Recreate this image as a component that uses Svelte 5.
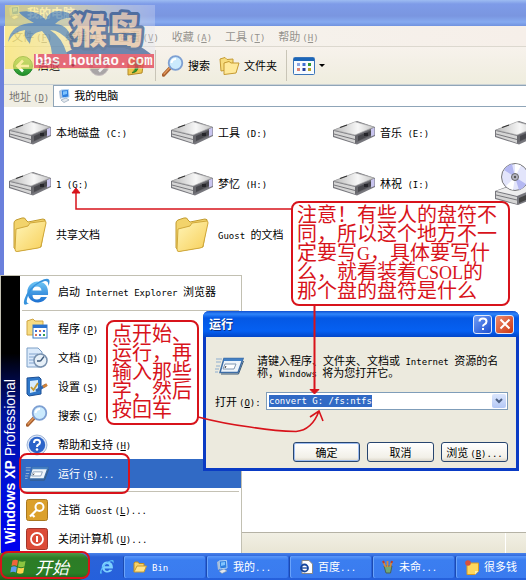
<script lang="ts">
	import { onMount } from 'svelte';

	type Entry = { icon: string; text: string; key?: string; tail?: string; active?: boolean };

	const menus: [string, string][] = [
		['文件', 'F'],
		['编辑', 'E'],
		['查看', 'V'],
		['收藏', 'A'],
		['工具', 'T'],
		['帮助', 'H']
	];

	const places = [
		{ icon: 'drive', text: '本地磁盘 (C:)' },
		{ icon: 'drive', text: '工具 (D:)' },
		{ icon: 'drive', text: '音乐 (E:)' },
		{ icon: 'drive', text: '' },
		{ icon: 'drive', text: '1 (G:)' },
		{ icon: 'drive', text: '梦忆 (H:)' },
		{ icon: 'drive', text: '林祝 (I:)' },
		{ icon: 'cd', text: '' },
		{ icon: 'folder', text: '共享文档' },
		{ icon: 'folder', text: 'Guost 的文档' }
	];

	const entries: Entry[] = [
		{ icon: 'programs', text: '程序', key: 'P' },
		{ icon: 'documents', text: '文档', key: 'D' },
		{ icon: 'settings', text: '设置', key: 'S' },
		{ icon: 'search', text: '搜索', key: 'C' },
		{ icon: 'help', text: '帮助和支持', key: 'H' },
		{ icon: 'run', text: '运行', key: 'R', tail: '...', active: true }
	];

	const exits: Entry[] = [
		{ icon: 'logoff', text: '注销 Guost', key: 'L', tail: '...' },
		{ icon: 'power', text: '关闭计算机', key: 'U', tail: '...' }
	];

	const tasks = [
		{ icon: 'smallfolder', text: 'Bin' },
		{ icon: 'computer', text: '我的...' },
		{ icon: 'page', text: '百度...' },
		{ icon: 'paint', text: '未命...' },
		{ icon: 'note', text: '很多钱' }
	];

	let command = $state('convert G: /fs:ntfs');
	let box: HTMLInputElement;

	onMount(() => {
		box.focus();
		box.select();
	});

	// Latin runs are set in a half-width face beside the full-width characters.
	function runs(s: string): string[] {
		return s.split(/([\x20-\x7e]+)/).filter(Boolean);
	}
</script>

{#snippet label(text: string, key = '', tail = '')}
	<span class="label">{#each runs(text) as part}{#if part.charCodeAt(0) < 127}<span class="lat">{part}</span>{:else}{part}{/if}{/each}{#if key}<span class="lat key">(<u>{key}</u>){tail}</span>{/if}</span>
{/snippet}

{#snippet icon(name: string)}
	{#if name === 'drive'}
		<svg width="42" height="24" viewBox="0 0 42 24">
			<path d="M0 9 24 0 42 6V15L24 23.500 0 16Z" fill="#77777d" />
			<path d="M1 9 22 .8 41 6 22 14Z" fill="url(#metal)" stroke="#aaa" stroke-width=".6" />
			<path d="M1 10 22 15V22L1 15Z" fill="#d5d5d5" />
			<path d="M1 13 22 18.500" stroke="#77777b" />
			<path d="M22 15 41 7V14L22 22Z" fill="#68686d" />
			<path d="M25 15 38 9.500V14L25 20Z" fill="#48484d" />
			<path d="M38 8 41.500 6.500V14L38 15.500Z" fill="#c9c5ef" />
			<path d="M7 6.500 14 4" stroke="#333" stroke-width="1.300" />
			<path d="M31 12h4v3h-4z" fill="#25252a" />
		</svg>
	{:else if name === 'cd'}
		<svg width="42" height="44" viewBox="0 0 42 44">
			<path d="M0 29 22 21 42 26V35L23 43 0 37Z" fill="#77777d" />
			<path d="M1 29 22 22 41 26 22 34Z" fill="#eee" />
			<path d="M1 30 22 35V42L1 36Z" fill="#d5d5d5" />
			<path d="M1 33 22 38" stroke="#77777b" />
			<path d="M24 36 40 29V34L24 41Z" fill="#444" />
			<circle cx="20" cy="15" r="13.500" fill="#e3e5fb" stroke="#777" />
			<path d="M20 15 9 8A13 13 0 0 1 17 2ZM20 15 31 22A13 13 0 0 1 24 28Z" fill="#b4b8f2" />
			<path d="M20 15 20 2A13 13 0 0 1 26 3.500ZM20 15 18 28A13 13 0 0 1 11 24Z" fill="#fff" />
			<circle cx="20" cy="15" r="3.500" fill="#b6b6c4" stroke="#666" />
			<circle cx="20" cy="15" r="1.200" fill="#555" />
		</svg>
	{:else if name === 'folder'}
		<svg width="34" height="36" viewBox="0 0 34 36">
			<path d="M1 6Q1 4 3 3L9 1Q12 0 13 3L15 5 30 2Q33 2 32 5L28 30 5 34 1 31Z" fill="#f2d36b" stroke="#c19b30" />
			<path d="M3 12 15 9 17 6 32 4Q33 4 33 6L28 29Q27 31 25 31L4 34.500Q2 35 2 32Z" fill="url(#yellow)" stroke="#d0a83a" />
		</svg>
	{:else if name === 'smallfolder'}
		<svg width="14" height="12" viewBox="0 0 14 12">
			<path d="M1 11V2L2 1H5L6 2.500H11V5" fill="#f5d26b" stroke="#b88c28" />
			<path d="M1 11 4 5H13.500L11 11Z" fill="#ffe48a" stroke="#c59a32" />
		</svg>
	{:else if name === 'folders'}
		<svg width="21" height="18" viewBox="0 0 21 18">
			<path d="M1 2 6 .5 8 2.500 14 2V12L2 14Z" fill="#f7dc7c" stroke="#c59a32" />
			<path d="M5 6 10 4.500 12 6 20 6 17 16 5 17.500Z" fill="#ffe99a" stroke="#c59a32" />
		</svg>
	{:else if name === 'up'}
		<svg width="20" height="20" viewBox="0 0 20 20">
			<path d="M2 3 9 1 11 4 18 3 16 17 2 19Z" fill="#ecc64c" stroke="#b58a28" />
			<path d="M6 17Q13 16 12 9L15 10 11 4 7 9 9.500 9Q10 14 6 17Z" fill="#2e9b2c" stroke="#176317" stroke-width=".6" />
		</svg>
	{:else if name === 'back' || name === 'forward'}
		<svg width="20" height="20" viewBox="0 0 20 20">
			<circle cx="10" cy="10" r="9.500" fill={name === 'back' ? 'url(#green)' : '#a9a5a6'} stroke={name === 'back' ? '#27872b' : '#c8bfc0'} />
			{#if name === 'back'}
				<path d="M10 4.500 4.500 10 10 15.500M5 10H16" fill="none" stroke="#fff" stroke-width="2.600" />
			{:else}
				<path d="M10 4.500 15.500 10 10 15.500M4 10H15" fill="none" stroke="#eee" stroke-width="2.600" />
			{/if}
		</svg>
	{:else if name === 'search'}
		<svg width="22" height="22" viewBox="0 0 22 22">
			<path d="M9 12 1.500 20" stroke="#a85f2e" stroke-width="3.500" stroke-linecap="round" />
			<path d="M9 11.500 2 19" stroke="#e39a5c" stroke-width="1.200" stroke-linecap="round" />
			<circle cx="13.500" cy="8" r="6.800" fill="#cbeafd" stroke="#7d9fd2" stroke-width="1.800" />
			<path d="M9.500 8Q10 4 14 4" fill="none" stroke="#fff" stroke-width="2" />
		</svg>
	{:else if name === 'views'}
		<svg width="22" height="18" viewBox="0 0 22 18">
			<rect x=".5" y=".5" width="21" height="17" rx="1" fill="#f7fbff" stroke="#3974b9" />
			<path d="M1 1H21V4H1Z" fill="#1c66b8" />
			<path d="M4 6h3v3h-3z" fill="#8ca5e3" /><path d="M9.500 6h3v3h-3z" fill="#3e6ed2" /><path d="M15 6h3v3h-3z" fill="#2f9a39" />
			<path d="M4 11h3v3h-3z" fill="#e08372" /><path d="M9.500 11h3v3h-3z" fill="#233d9b" /><path d="M15 11h3v3h-3z" fill="#b8a52c" />
		</svg>
	{:else if name === 'computer'}
		<svg width="12" height="14" viewBox="0 0 12 14">
			<path d="M3 1 10.500 .5 11 8 4 9Z" fill="#2d7fdf" stroke="#b9d8f6" />
			<path d="M5 2.500 9 2V5L5 6Z" fill="#7fc4ff" />
			<path d="M1 2 3 1 4 9 2 10Z" fill="#a9bed8" />
			<path d="M3 11 8 9 11 11 6 13.500Z" fill="#e4e9ee" stroke="#8096ac" stroke-width=".6" />
		</svg>
	{:else if name === 'ie' || name === 'smallie'}
		<svg width={name === 'ie' ? 28 : 16} height={name === 'ie' ? 30 : 16} viewBox="0 0 28 30">
			<path d="M14 4.500A10.500 10.500 0 1 0 24 20H18Q17 22.500 14 22.500 9.500 22.500 9.500 18H25Q26 4.500 14 4.500ZM9.500 13.500Q10 9.500 14 9.500T18.500 13.500Z" fill={name === 'ie' ? 'url(#blue)' : '#7fd0ff'} fill-rule="evenodd" />
			<path d="M6 26Q-1 31 1.500 22 5 11 17 4 27-1 26.500 5 26.500 7 25 9 26 4 22 4 11 6 5 19 2 27 6 26Z" fill={name === 'ie' ? '#3793dd' : '#5abdf8'} />
		</svg>
	{:else if name === 'programs'}
		<svg width="22" height="22" viewBox="0 0 22 22">
			<path d="M1 3 7 1 9 3H17V17H1Z" fill="#f6dc82" stroke="#d0a644" />
			<rect x="7" y="7" width="14" height="13" fill="#fff" stroke="#377bc8" />
			<path d="M7 7H21V10H7Z" fill="#2a72ce" />
			<path d="M9 12h2v2H9zM17 12h2v2h-2zM13 16h2v2h-2z" fill="#3d70d3" />
			<path d="M13 12h2v2h-2zM9 16h2v2H9z" fill="#da6e55" /><path d="M17 16h2v2h-2z" fill="#37a04a" />
		</svg>
	{:else if name === 'documents'}
		<svg width="22" height="22" viewBox="0 0 22 22">
			<path d="M1 1H12L16 5V20H1Z" fill="#dbeafb" stroke="#7d9fc6" />
			<path d="M3 7H12M3 10H9M3 13H8M3 16H8" stroke="#83a4ce" />
			<circle cx="14.500" cy="13.500" r="6.500" fill="#e7f0f8" stroke="#7790ae" stroke-width="1.500" />
			<path d="M14.500 14 18 9.500M14.500 14H11" stroke="#405b7b" stroke-width="1.300" />
		</svg>
	{:else if name === 'settings'}
		<svg width="22" height="22" viewBox="0 0 22 22">
			<path d="M1 2 13 1 15 3V18L3 20 1 18Z" fill="#2f78ca" stroke="#1d4f94" />
			<path d="M4 5 12 4V15L4 17Z" fill="#d8edff" />
			<path d="M5 11 7.500 14 12 7" fill="none" stroke="#c49a35" stroke-width="1.800" />
			<path d="M10 15 20 9" stroke="#2f67b0" stroke-width="3" /><path d="M17 11 21 8.500" stroke="#d18136" stroke-width="3" />
		</svg>
	{:else if name === 'help'}
		<svg width="22" height="22" viewBox="0 0 22 22">
			<circle cx="11" cy="11" r="10" fill="#dce6f6" stroke="#9db4d8" />
			<circle cx="11" cy="11" r="8.200" fill="#2b63c9" />
			<path d="M8 9Q8 5.800 11 5.800T14 8.600Q14 10.200 12 11 11 11.500 11 13" fill="none" stroke="#fff" stroke-width="2" />
			<circle cx="11" cy="15.500" r="1.300" fill="#fff" />
		</svg>
	{:else if name === 'run'}
		<svg width="29" height="18" viewBox="0 0 29 18">
			<path d="M1 2H7M1 5H6M1 9H5M0 12H4M0 15H3" stroke="#8eaed0" stroke-width="1.200" />
			<path d="M9 1.500H28L23 15.500H5Z" fill="#eef4fa" stroke="#3d6da6" stroke-width="1.500" />
			<path d="M9 1.500H28L27 4H8.500Z" fill="#4481c4" />
			<path d="M10 7H21L19 12H8Z" fill="#fff" stroke="#8097b2" />
			<path d="M11 9 10 11" stroke="#333" /><path d="M6 17H23.500L28.500 4" fill="none" stroke="#3a5877" />
		</svg>
	{:else if name === 'logoff'}
		<svg width="22" height="22" viewBox="0 0 22 22">
			<rect x=".5" y=".5" width="21" height="21" rx="2" fill="#dba02c" stroke="#a97820" />
			<circle cx="13.500" cy="8" r="4" fill="none" stroke="#fff" stroke-width="2" />
			<path d="M10.500 11 4 17.500M6 15.500 8.500 18" stroke="#fff" stroke-width="2.200" />
		</svg>
	{:else if name === 'power'}
		<svg width="22" height="22" viewBox="0 0 22 22">
			<rect x=".5" y=".5" width="21" height="21" rx="2" fill="#dc4b37" stroke="#a3362a" />
			<circle cx="11" cy="11" r="6" fill="none" stroke="#fff" stroke-width="1.800" />
			<path d="M11 8V14" stroke="#fff" stroke-width="2" />
		</svg>
	{:else if name === 'flag'}
		<svg width="17" height="17" viewBox="0 0 17 17">
			<path d="M2.500 2.500Q5.500 1 8 2.500L7 8Q4 6.500 1.500 8Z" fill="#f0643a" />
			<path d="M9 3Q12 4.500 15.500 3L14.500 8.500Q11 10 8 8.500Z" fill="#8bc540" />
			<path d="M1.300 9Q4 7.500 6.800 9L6 14.500Q3 13 .3 14.500Z" fill="#5b9cf0" />
			<path d="M7.800 9.500Q11 11 14.300 9.500L13.200 15Q10 16.500 6.900 15Z" fill="#fbd24b" />
		</svg>
	{:else if name === 'page'}
		<svg width="14" height="14" viewBox="0 0 14 14">
			<path d="M3 .5H10L13.500 4V13.500H3Z" fill="#fff" stroke="#888" />
			<circle cx="5.500" cy="8" r="3.500" fill="none" stroke="#16469c" stroke-width="1.800" /><path d="M3 8H9" stroke="#16469c" stroke-width="1.300" />
		</svg>
	{:else if name === 'paint'}
		<svg width="12" height="14" viewBox="0 0 12 14">
			<path d="M2 6H10L8.500 13H4Z" fill="#72a878" stroke="#4b6258" />
			<path d="M3.500 7 1 1M5.500 7V1M8 7 10 1" stroke="#d58a3c" stroke-width="1.800" />
			<path d="M1 1 2 3M10 1 9.500 3" stroke="#b83a31" stroke-width="2" />
		</svg>
	{:else if name === 'note'}
		<svg width="14" height="15" viewBox="0 0 14 15">
			<path d="M2 3H13.500V11L10 14.500H2Z" fill="#ffd75c" stroke="#d89a24" />
			<path d="M13.500 11H10V14.500" fill="#ffefaa" />
			<circle cx="3" cy="3" r="2.800" fill="#d8503d" />
		</svg>
	{/if}
{/snippet}

<svg class="defs" width="0" height="0" aria-hidden="true">
	<linearGradient id="metal"><stop offset="0" stop-color="#bbb" /><stop offset=".6" stop-color="#f7f7f7" /><stop offset="1" stop-color="#c4c4c4" /></linearGradient>
	<linearGradient id="yellow" x2="1" y2="1"><stop offset="0" stop-color="#fff5b8" /><stop offset="1" stop-color="#f7cf58" /></linearGradient>
	<linearGradient id="green" x2="0" y2="1"><stop offset="0" stop-color="#74cf60" /><stop offset="1" stop-color="#1f8f2c" /></linearGradient>
	<linearGradient id="blue" x2="0" y2="1"><stop offset="0" stop-color="#6fc7f5" /><stop offset="1" stop-color="#1b6fd0" /></linearGradient>
	<linearGradient id="sand"><stop offset="0" stop-color="#fbe45c" /><stop offset=".45" stop-color="#f3e399" /><stop offset="1" stop-color="#dfe2f5" stop-opacity=".5" /></linearGradient>
</svg>

<div class="desktop">
	<main class="window">
		<header class="caption">{@render icon('computer')}<h1>我的电脑</h1></header>
		<nav class="menubar">
			{#each menus as [text, key]}
				<button type="button">{@render label(text, key)}</button>
			{/each}
		</nav>
		<div class="toolbar">
			<button type="button" class="back">{@render icon('back')}{@render label('后退')}<span class="caret"></span></button>
			<button type="button" class="forward" aria-label="前进">{@render icon('forward')}</button>
			<button type="button" aria-label="向上">{@render icon('up')}</button>
			<span class="rule"></span>
			<button type="button">{@render icon('search')}{@render label('搜索')}</button>
			<button type="button">{@render icon('folders')}{@render label('文件夹')}</button>
			<span class="rule"></span>
			<button type="button" aria-label="查看">{@render icon('views')}<span class="caret"></span></button>
		</div>
		<div class="address">
			<label for="address">{@render label('地址', 'D')}</label>
			<div class="field">{@render icon('computer')}<input id="address" value="我的电脑" /></div>
		</div>
		<div class="files">
			{#each places as place}
				<div class="place">
					<span class="pic">{@render icon(place.icon)}</span>
					{@render label(place.text)}
				</div>
			{/each}
		</div>
		<footer class="status"><span></span></footer>
	</main>

	<footer class="taskbar">
		<button type="button" class="start">{@render icon('flag')}<span>开始</span></button>
		<button type="button" class="quick" aria-label="Internet Explorer">{@render icon('smallie')}</button>
		{#each tasks as task}
			<button type="button" class="task">{@render icon(task.icon)}{@render label(task.text)}</button>
		{/each}
	</footer>

	<nav class="startmenu">
		<div class="brand"><span><b>Windows XP</b> Professional</span></div>
		<div class="entries">
			<button type="button" class="entry top"><span class="pic">{@render icon('ie')}</span>{@render label('启动 Internet Explorer 浏览器')}</button>
			<hr />
			{#each entries as entry}
				<button type="button" class="entry" class:active={entry.active}>
					<span class="pic">{@render icon(entry.icon)}</span>{@render label(entry.text, entry.key, entry.tail)}
				</button>
			{/each}
			<hr />
			{#each exits as entry}
				<button type="button" class="entry"><span class="pic">{@render icon(entry.icon)}</span>{@render label(entry.text, entry.key, entry.tail)}</button>
			{/each}
		</div>
	</nav>

	<form class="dialog" onsubmit={(e) => e.preventDefault()}>
		<header>
			<h2>运行</h2>
			<button type="button" class="ctl" aria-label="帮助">
				<svg width="12" height="14" viewBox="0 0 12 14"><path d="M2.500 4.500Q2.500 1.500 6 1.500T9.500 4.500Q9.500 6.300 7.500 7.300 6 8 6 9.500" fill="none" stroke="#fff" stroke-width="2" /><path d="M5 11h2v2H5z" fill="#fff" /></svg>
			</button>
			<button type="button" class="ctl close" aria-label="关闭">
				<svg width="12" height="12" viewBox="0 0 12 12"><path d="M1.500 1.500 10.500 10.500M10.500 1.500 1.500 10.500" stroke="#fff" stroke-width="2" /></svg>
			</button>
		</header>
		<div class="body">
			<div class="intro">
				{@render icon('run')}
				<p>{@render label('请键入程序、文件夹、文档或 Internet 资源的名')}<br />{@render label('称，Windows 将为您打开它。')}</p>
			</div>
			<div class="open">
				<label for="command">{@render label('打开', 'O', ':')}</label>
				<div class="combo">
					<input id="command" bind:this={box} bind:value={command} spellcheck="false" />
					<button type="button" aria-label="展开">
						<svg width="8" height="6" viewBox="0 0 8 6"><path d="M1 1 4 4 7 1" fill="none" stroke="#4d6185" stroke-width="2" /></svg>
					</button>
				</div>
			</div>
			<div class="actions">
				<button type="submit" class="default">确定</button>
				<button type="button">取消</button>
				<button type="button">{@render label('浏览', 'B', '...')}</button>
			</div>
		</div>
	</form>

	<div class="callout drives">注意！有些人的盘符不<br />同，所以这个地方不一<br />定要写<span>G</span>，具体要写什<br />么，就看装着<span>CSOL</span>的<br />那个盘的盘符是什么</div>
	<div class="callout steps">点开始、<br />运行，再<br />输入那些<br />字，然后<br />按回车</div>
	<div class="ring ring-run"></div>
	<div class="ring ring-start"></div>

	<svg class="arrows" width="526" height="580" viewBox="0 0 526 580" fill="none" stroke="#d8131b" stroke-width="2" aria-hidden="true">
		<path d="M291 209H76V192" stroke-width="1.500" />
		<path d="M76 188 80 193H72Z" fill="#d8131b" stroke-width="1" />
		<path d="M314.500 305V390" />
		<path d="M314.500 394 310 389.500H319Z" fill="#d8131b" stroke-width="1" />
		<path d="M198 417Q225 424 250 427 274 431 296 431.500 312 430 319 411M310 417 319 411 323 421" stroke-width="1.600" />
	</svg>

	<svg class="logo" width="150" height="64" viewBox="0 0 150 64" aria-hidden="true">
		<rect width="150" height="64" fill="url(#sand)" opacity=".8" />
		<path d="M58 49Q84 34 110 39 128 34 146 49Z" fill="#4d6c9d" />
		<path d="M3 37Q6 18 29 18 15 10 14 7 32 4 41 15 45 2 64 8L67 13Q56 12 50 19 66 20 66 38 55 25 45 25 57 32 62 49H47Q46 35 37 26 25 28 25 39 18 31 20 25 9 26 3 37Z" fill="#638eb0" />
		<g font-family="Noto Sans CJK SC" font-size="36" font-weight="900" stroke-linejoin="round">
			<text x="66" y="39" fill="#e5c7a9" stroke="#46648f" stroke-width="6" paint-order="stroke">猴岛</text>
		</g>
		<rect x="29" y="49" width="120" height="14" fill="#e2495c" />
		<text x="30" y="60" fill="#fff" font-family="Liberation Mono" font-size="14" font-weight="700">bbs.houdao.com</text>
	</svg>
</div>

<style>
	:global(body) {
		margin: 0;
		overflow: hidden;
	}

	.desktop {
		position: relative;
		display: flex;
		flex-direction: column;
		min-height: 100vh;
		overflow: hidden;
		color: #000;
		font: 11px/12px 'Noto Sans CJK SC', sans-serif;
	}

	.defs {
		position: absolute;
	}

	svg {
		flex: none;
		display: block;
	}

	button,
	input {
		margin: 0;
		padding: 0;
		border: 0;
		background: none;
		color: inherit;
		font: inherit;
	}

	button {
		white-space: nowrap;
	}

	.label {
		padding-bottom: 2px;
		white-space: pre;
	}

	.lat {
		font-family: 'DejaVu Sans Mono', monospace;
		font-size: 9px;
		line-height: 0;
	}

	.key {
		margin-left: 2px;
	}

	.window {
		flex: 1;
		display: flex;
		flex-direction: column;
		border-left: 4px solid #6b80dc;
		background: #fff;
	}

	.caption {
		display: flex;
		align-items: center;
		gap: 7px;
		height: 26px;
		margin-left: -4px;
		padding-left: 8px;
		background: linear-gradient(#9dbcf2, #7e9be8 4px, #7a96e0 16px, #86aaf0 22px, #7092df);
		color: #fff;
	}

	h1 {
		margin: 0;
		font-size: 12px;
	}

	.menubar {
		display: flex;
		gap: 13px;
		height: 20px;
		padding-left: 8px;
		border-bottom: 1px solid #dcd8cf;
		background: linear-gradient(90deg, #f5f4ee, #f6efe9);
		color: #95938e;
	}

	.toolbar {
		display: flex;
		align-items: center;
		gap: 9px;
		height: 37px;
		padding-left: 9px;
		background: linear-gradient(#f7f2ec, #efedde);
	}

	.toolbar button {
		display: flex;
		align-items: center;
		gap: 4px;
	}

	.toolbar .back {
		gap: 5px;
	}

	.toolbar .forward {
		padding: 0 8px 0 4px;
	}

	.back .caret {
		margin-left: 5px;
	}

	.rule {
		height: 31px;
		border-left: 1px solid #c9c5b7;
	}

	.rule + button {
		margin-left: -3px;
	}

	.caret {
		border: 3px solid transparent;
		border-top-color: #000;
		border-bottom: 0;
	}

	.address {
		display: flex;
		align-items: center;
		gap: 4px;
		padding-left: 5px;
		border-top: 1px solid #cbd2d5;
		background: #f0eee3;
		color: #77756f;
	}

	.field {
		flex: 1;
		display: flex;
		align-items: center;
		gap: 4px;
		height: 20px;
		padding-left: 4px;
		border: 1px solid #8fa5b8;
		border-right: 0;
		background: #fff;
		color: #000;
	}

	.field input {
		flex: 1;
		min-width: 0;
		padding-bottom: 2px;
	}

	.files {
		flex: 1;
		display: grid;
		grid-template-columns: repeat(4, 162px);
		grid-auto-rows: 51px;
		padding-left: 5px;
		overflow: hidden;
	}

	.place {
		display: flex;
		align-items: center;
		gap: 5px;
	}

	.place .pic {
		display: flex;
		justify-content: center;
		width: 42px;
	}

	.status {
		display: flex;
		justify-content: flex-end;
		height: 20px;
		padding: 0 20px 0 0;
		border-top: 1px solid #b5b2a5;
		background: linear-gradient(#f1efe4, #e9e5d4);
	}

	.status span {
		border-left: 1px solid #fff;
	}

	.taskbar {
		display: flex;
		align-items: stretch;
		height: 27px;
		background: linear-gradient(#4a83ea, #2a62d8 4px, #2560dc);
		color: #fff;
	}

	.start {
		display: flex;
		align-items: center;
		gap: 8px;
		flex: none;
		width: 89px;
		padding-left: 10px;
		border-radius: 0 10px 10px 0;
		background: linear-gradient(#4e9a47, #2c7c26 5px, #2b7f26 20px, #1d611b);
	}

	.start span {
		font-size: 17px;
		font-style: italic;
		line-height: 20px;
	}

	.quick {
		display: flex;
		align-items: center;
		justify-content: center;
		flex: none;
		width: 35px;
	}

	.task {
		display: flex;
		align-items: center;
		gap: 5px;
		flex: none;
		width: 81px;
		margin: 3px 2px 2px 0;
		padding-left: 9px;
		border-radius: 2px;
		background: linear-gradient(#5b98f9, #3b7ef0 4px, #3a7bef);
		box-shadow: inset 1px 0 #6aa3fb, -1px 0 #1c4bb2;
	}

	.startmenu {
		position: absolute;
		bottom: 27px;
		left: 0;
		display: flex;
		width: 242px;
		box-sizing: border-box;
		border: 1px solid #c2c0b2;
		border-bottom: 0;
		background: #fff;
	}

	.brand {
		display: flex;
		align-items: center;
		justify-content: center;
		width: 19px;
		background: linear-gradient(#0000f0, #0010d8 25%, #00129c 50%, #000 72%);
		color: #fff;
		font: 14px/19px 'Liberation Sans', sans-serif;
		writing-mode: vertical-rl;
		transform: rotate(180deg);
	}

	.brand span {
		flex: 1;
		padding-top: 9px;
	}

	.entries {
		flex: 1;
	}

	.entry {
		display: flex;
		align-items: center;
		gap: 7px;
		width: 100%;
		height: 29px;
		padding-left: 2px;
		text-align: left;
	}

	.entry .pic {
		display: flex;
		justify-content: center;
		width: 29px;
	}

	.entry.top {
		height: 31px;
	}

	.entry.active {
		background: #316ac5;
		color: #fff;
	}

	.active :global(svg) {
		width: 24px;
		height: 15px;
	}

	hr {
		margin: 3px 2px;
		border: 0;
		border-top: 1px solid #c4c1b4;
	}

	.dialog {
		position: absolute;
		top: 311px;
		left: 203px;
		width: 316px;
		box-sizing: border-box;
		border: 3px solid #0a3bc4;
		border-top: 0;
		border-radius: 6px 6px 0 0;
		background: #eceade;
	}

	.dialog header {
		display: flex;
		align-items: center;
		gap: 3px;
		height: 26px;
		margin: 0 -3px;
		padding: 0 5px 0 6px;
		border-radius: 6px 6px 0 0;
		background: linear-gradient(#0f4fd0, #2f85fa 3px, #0458e4 7px, #0560f2 20px, #0346c8);
		color: #fff;
	}

	h2 {
		flex: 1;
		margin: 0;
		font-size: 12px;
		text-shadow: 1px 1px #0a2f86;
	}

	.ctl {
		display: flex;
		align-items: center;
		justify-content: center;
		width: 19px;
		height: 19px;
		border: 1px solid #dfe8fb;
		border-radius: 3px;
		background: linear-gradient(135deg, #6f9cf6, #1e50d0);
	}

	.close {
		background: linear-gradient(135deg, #ee8a6c, #cc3712);
	}

	.body {
		padding: 17px 8px 6px 9px;
	}

	.intro {
		display: flex;
		align-items: flex-start;
		gap: 13px;
	}

	.intro :global(svg) {
		margin-top: 3px;
	}

	p {
		margin: 0;
		white-space: nowrap;
	}

	.open {
		display: flex;
		align-items: center;
		justify-content: space-between;
		margin-top: 14px;
	}

	.combo {
		display: flex;
		align-items: stretch;
		width: 242px;
		height: 18px;
		box-sizing: border-box;
		border: 1px solid #7f9db9;
		background: #fff;
	}

	.combo input {
		flex: 1;
		min-width: 0;
		padding-left: 2px;
		outline: none;
		font: 9px/12px 'DejaVu Sans Mono', monospace;
	}

	.combo input::selection {
		background: #316ac5;
		color: #fff;
	}

	.combo button {
		display: flex;
		align-items: center;
		justify-content: center;
		width: 14px;
		margin: 1px;
		border-radius: 2px;
		background: linear-gradient(#dbe6fd, #b4c8f6);
	}

	.actions {
		display: flex;
		justify-content: flex-end;
		gap: 7px;
		margin-top: 32px;
	}

	.actions button {
		width: 67px;
		height: 20px;
		border: 1px solid #27456f;
		border-radius: 3px;
		background: linear-gradient(#fff, #f2f0e8 80%, #dcd7ca);
	}

	.actions .default {
		box-shadow: inset 0 0 0 1px #9dbcf0;
	}

	.callout {
		position: absolute;
		box-sizing: border-box;
		padding: 1px 4px 5px;
		border: 2px solid #d8131b;
		border-radius: 8px;
		background: #fff;
		color: #d8131b;
		font-size: 20px;
		line-height: 19px;
		white-space: nowrap;
	}

	.callout span {
		font: 18px/0 'Liberation Serif', serif;
	}

	.drives {
		top: 201px;
		left: 291px;
		width: 219px;
	}

	.steps {
		top: 320px;
		left: 106px;
		width: 93px;
	}

	.ring {
		position: absolute;
		box-sizing: border-box;
		border: 2px solid #d8131b;
		border-radius: 8px;
		pointer-events: none;
	}

	.ring-run {
		bottom: 86px;
		left: 19px;
		width: 111px;
		height: 41px;
	}

	.ring-start {
		bottom: 1px;
		left: 0;
		width: 90px;
		height: 28px;
	}

	.arrows {
		position: absolute;
		top: 0;
		left: 0;
		pointer-events: none;
	}

	.logo {
		position: absolute;
		top: 5px;
		left: 5px;
		opacity: 0.8;
		pointer-events: none;
	}
</style>
